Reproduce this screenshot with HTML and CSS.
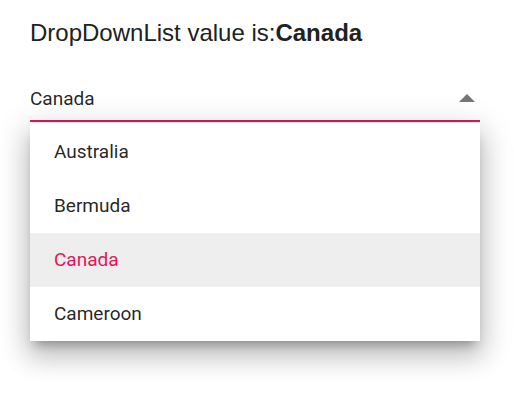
FILE: index.html
```html
<!DOCTYPE html>
<html>
<head>
<meta charset="utf-8">
<link rel="stylesheet" href="styles.css">
</head>
<body>
<div class="page">
  <h1 class="title">DropDownList value is:<b>Canada</b></h1>
  <div class="dropdown">
    <div class="input">
      <span class="value">Canada</span>
      <svg class="arrow" width="16" height="8" viewBox="0 0 16 8"><path d="M0 8 L8 0 L16 8 Z" fill="#757575"/></svg>
    </div>
    <ul class="popup">
      <li class="item">Australia</li>
      <li class="item">Bermuda</li>
      <li class="item active">Canada</li>
      <li class="item">Cameroon</li>
    </ul>
  </div>
</div>
</body>
</html>
```

FILE: styles.css
```css
html, body {
  margin: 0;
  padding: 0;
  background: #fff;
}
body {
  min-height: 406px;
}
.page {
  padding: 19px 34px 60px 30px;
}
.title {
  margin: 0;
  font-family: "Liberation Sans", Arial, sans-serif;
  font-weight: normal;
  font-size: 24px;
  line-height: 28px;
  color: #212121;
}
.title b {
  font-weight: bold;
}
.dropdown {
  margin-top: 31px;
  width: 450px;
}
.input {
  display: flex;
  align-items: center;
  justify-content: space-between;
  height: 41px;
  padding-bottom: 1px;
  border-bottom: 2px solid #e3165b;
  font-family: Roboto, sans-serif;
  font-size: 19px;
  color: rgba(0,0,0,0.87);
}
.arrow {
  margin-right: 5px;
  margin-top: -2px;
}
.popup {
  list-style: none;
  margin: 1px 0 0 0;
  padding: 2px 0 0 0;
  background: #fff;
  box-shadow: 0 8px 10px -5px rgba(0,0,0,0.3), 0 16px 24px 2px rgba(0,0,0,0.16), 0 6px 30px 5px rgba(0,0,0,0.12);
}
.item {
  height: 54px;
  line-height: 54px;
  padding-left: 24px;
  font-family: Roboto, sans-serif;
  font-size: 19px;
  color: rgba(0,0,0,0.87);
}
.item.active {
  background: #eeeeee;
  color: #e3165b;
}
```
